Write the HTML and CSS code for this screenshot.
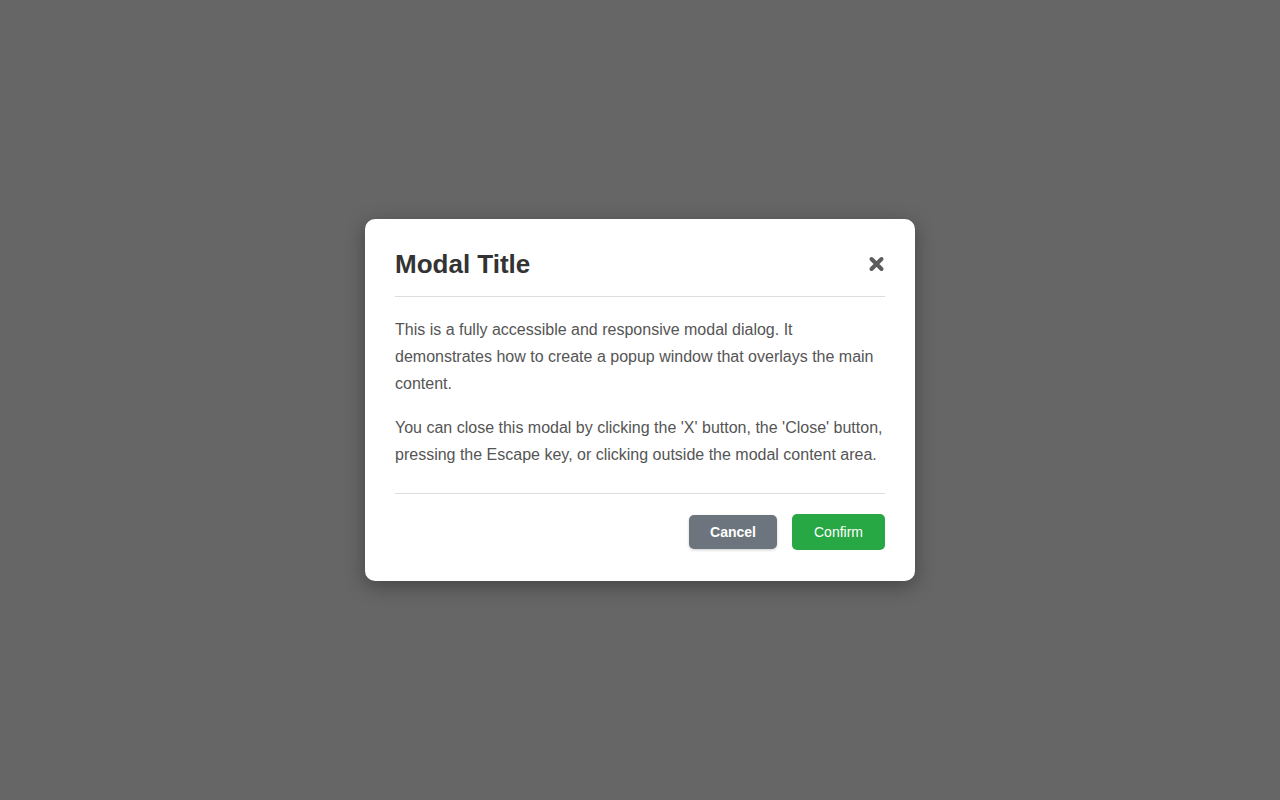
FILE: index.html
```html
<!DOCTYPE html>
<html lang="en">
<head>
  <meta charset="UTF-8">
  <title>Modal Dialog</title>
  <link rel="stylesheet" href="styles.css">
</head>
<body>
  <div class="modal-overlay" id="modalOverlay">
    <div class="modal" role="dialog" aria-modal="true" aria-labelledby="modalTitle">
      <div class="modal-header">
        <h2 id="modalTitle">Modal Title</h2>
        <button class="close-button" aria-label="Close">
          <svg width="18" height="18" viewBox="0 0 18 18" aria-hidden="true">
            <path d="M3.5 4 L13.5 14 M13.5 4 L3.5 14" stroke="#5c5c5c" stroke-width="4" stroke-linecap="round"/>
          </svg>
        </button>
      </div>

      <div class="modal-body">
        <p>This is a fully accessible and responsive modal dialog. It demonstrates how to create a popup window that overlays the main content.</p>
        <p>You can close this modal by clicking the 'X' button, the 'Close' button, pressing the Escape key, or clicking outside the modal content area.</p>
      </div>

      <div class="modal-footer">
        <button class="btn btn-cancel">Cancel</button>
        <button class="btn btn-confirm">Confirm</button>
      </div>
    </div>
  </div>
</body>
</html>
```

FILE: styles.css
```css
html, body {
  height: 100%;
}

body {
  font-family: "Liberation Sans", Arial, sans-serif;
  margin: 0;
  background-color: #666;
}

.modal-overlay {
  display: flex;
  align-items: center;
  justify-content: center;
  height: 100%;
  background-color: #666;
}

.modal {
  width: 550px;
  box-sizing: border-box;
  padding: 30px 30px 31px;
  background-color: #fff;
  border-radius: 10px;
  box-shadow: 0 5px 20px rgba(0, 0, 0, 0.35);
}

.modal-header {
  display: flex;
  align-items: center;
  justify-content: space-between;
  padding-bottom: 17px;
  border-bottom: 1px solid #ddd;
}

.modal-header h2 {
  margin: 0;
  font-size: 26px;
  line-height: 30px;
  color: #333;
}

.close-button {
  display: flex;
  padding: 0;
  margin-right: -1px;
  border: none;
  background: none;
  cursor: pointer;
}

.modal-body {
  padding: 19px 0 8px;
  border-bottom: 1px solid #ddd;
}

.modal-body p {
  margin: 0 0 17px;
  font-size: 16px;
  line-height: 27px;
  color: #555;
}

.modal-footer {
  display: flex;
  justify-content: flex-end;
  gap: 15px;
  padding-top: 20px;
}

.btn {
  height: 36px;
  padding: 0 21px;
  border: none;
  border-radius: 5px;
  font-family: "Liberation Sans", Arial, sans-serif;
  font-size: 14px;
  color: #fff;
  cursor: pointer;
}

.btn-cancel {
  height: 34px;
  margin-top: 1px;
  font-weight: bold;
  background-color: #6c757d;
  box-shadow: 0 1px 3px rgba(0, 0, 0, 0.2);
}

.btn-confirm {
  padding: 0 22px;
  background-color: #28a745;
}
```
